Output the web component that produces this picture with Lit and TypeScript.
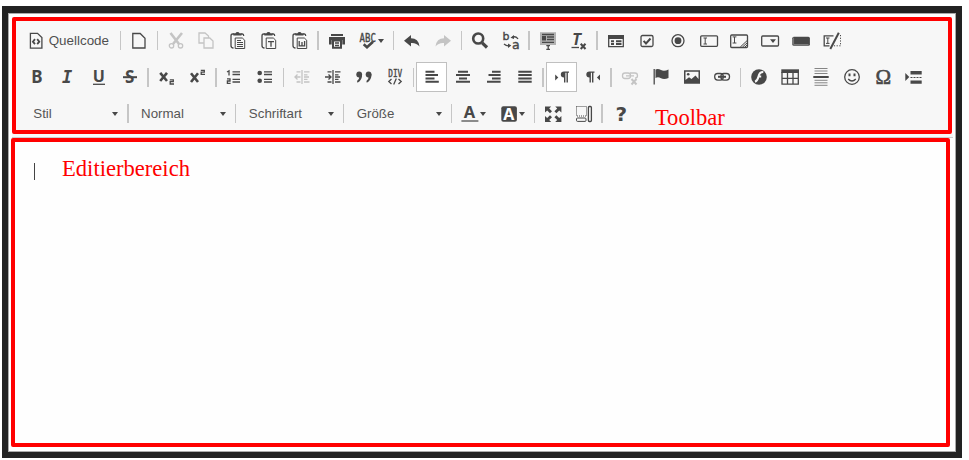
import { LitElement, html, css, svg, nothing } from "lit";
import { customElement, property } from "lit/decorators.js";

// Icons are drawn on a 24x20 grid centred on (12,10).
const clip = svg`<path class="l" d="M8 3H6.6Q5 3 5 5V14.5Q5 17 7.5 17"/><path class="l" d="M15 3H16.5Q17.7 3 17.7 5"/><path class="f" d="M7.3 2.2H9.5Q10 1 11.5 1T13.5 2.2H15.5V4.5H7.3Z"/><path class="l t" d="M9.2 7H16.3L18.7 9.2V17.5H9.2Z"/>`;
const page = svg`<path class="l" d="M5.8 2.5H13.2L18 7.2V17H5.8Z"/>`;

const icons: Record<string, unknown> = {
  source: svg`<path class="l" d="M6.4 2.3H13.5L17.9 6.6V17.2H6.4Z"/><path class="l m" d="M11 8.2L8.9 10.7L11 13.2M13.2 8.2L15.3 10.7L13.2 13.2"/>`,
  newpage: page,
  cut: svg`<path class="l w" d="M6.5 2L15 13M18 2L9 13"/><circle class="l" cx="7.5" cy="14.8" r="2.2"/><circle class="l" cx="16.5" cy="14.8" r="2.2"/>`,
  copy: svg`<path class="l" d="M9 12H4V2H10L13.5 5V7M9 7H14.8L18 10V17H9Z"/>`,
  paste: svg`${clip}<path class="l t" d="M11 9.5H15M11 11.5H17M11 13.5H17M11 15.5H17"/>`,
  pastetext: svg`${clip}<path class="l" d="M11 10.7H17M14 10.7V15.8"/>`,
  pasteword: svg`${clip}<path class="l" d="M11.2 10V14.8H16.6V10M14 11V14.8"/>`,
  print: svg`<path class="f" d="M6 3H18V5H6ZM4 6H20V13.5H17.3V9H6.7V13.5H4Z"/><path class="l b" d="M8 9.5H16V16.7H8Z"/><path class="l" d="M10 12H14M10 14.5H14"/>`,
  spell: svg`<text x="3.6" y="11" class="mono reg" font-size="11.5" textLength="16.3" lengthAdjust="spacingAndGlyphs">ABC</text><path class="l w" d="M7.7 13.2L11 16.2L17 10.7"/>`,
  undo: svg`<path class="f" d="M4 9.7L11 4V7.3Q18.5 7.3 19.5 15.5Q16.5 11.6 11 12V15.4Z"/>`,
  redo: svg`<path class="f" d="M20 9.7L13 4V7.3Q5.5 7.3 4.5 15.5Q7.5 11.6 13 12V15.4Z"/>`,
  find: svg`<circle class="l w" cx="10.2" cy="7.5" r="5"/><path class="l x" d="M14.2 11.8L19 16.5"/>`,
  replace: svg`<text x="3.4" y="8.7" class="dv reg" font-size="11">b</text><text x="13" y="18" class="dv reg" font-size="12.5">a</text><path class="l" d="M13 6.5Q17 4.5 19 8M5 13Q8 15.5 11 14.5"/><path class="f" d="M11.5 6.7L15 4V8ZM12.3 14.5L9 12.5V17Z"/>`,
  selectall: svg`<rect x="4" y="1.2" width="16" height="12.8" fill="#b3b3b3"/><path class="l" d="M6 3.5H18M11 6H18M11 8.5H18M6 11.3H18M10.3 14.7H14M10.3 18.3H14M12.2 14.5V18"/><path class="f" d="M6 5H10V9.5H6Z"/>`,
  removeformat: svg`<text x="5" y="14" class="mono bi" font-size="16">T</text><path class="l" d="M4.5 16.5H12"/><path class="l b" d="M13.7 12.8L18.5 18M18.5 12.8L13.7 18"/>`,
  form: svg`<path class="f" d="M4 4H20V8H4Z"/><path class="l" d="M4.7 5V15.7H19.3V5"/><path class="l b" d="M7 10.2H10M7 13H10M12 10.2H17.5M12 13H17.5"/>`,
  checkbox: svg`<rect class="l" x="6" y="4.5" width="12" height="11" rx="1.5"/><path class="l b" d="M8.6 9.8L11 12.5L15.5 7.5"/>`,
  radio: svg`<circle class="l" cx="12" cy="9.7" r="6"/><circle class="f" cx="12" cy="9.7" r="3.4"/>`,
  textfield: svg`<rect class="l" x="3.7" y="4.8" width="16.8" height="10.5" rx="1"/><path class="l t" d="M6.5 7H10M6.5 13H10M8.2 7V13"/>`,
  textarea: svg`<rect class="l" x="3.7" y="4" width="16.8" height="12.5" rx="1"/><path class="l t" d="M5.6 5.9H9.4M5.6 12H9.4M7.5 6V12M13.3 16L20 9.7M15.5 16L20 12M18 16L20 14"/>`,
  select: svg`<rect class="l" x="3.7" y="5" width="16.8" height="10" rx="1"/><path class="f" d="M12 8.2H18L15 12Z"/>`,
  button: svg`<rect class="f" x="3.3" y="5.7" width="17.6" height="9" rx="1.5"/><path d="M4.6 6.5V13.5H19.5" fill="none" stroke="#8a8a8a" stroke-width=".8"/>`,
  hidden: svg`<path class="l" d="M13.5 4.8H4.2V14.8H9.5"/><path class="l t" d="M6 7H9.5M6 12.4H9.5M7.8 7V12.4"/><path class="l b" d="M18.8 1.8L10.3 18"/><path class="l t" stroke-dasharray="1.2 1.5" d="M20.5 4V14.8H13"/>`,
  bold: svg`<text x="6.3" y="16" class="bold" font-size="17">B</text>`,
  italic: svg`<text x="6" y="16" class="mono bi" font-size="17">I</text>`,
  underline: svg`<text x="5.7" y="14.6" class="bold" font-size="16">U</text><path class="l" d="M6 17.3H18"/>`,
  strike: svg`<text x="7" y="15.9" class="bold" font-size="17">S</text><path class="l b" d="M5 10.2H19"/>`,
  sub: svg`<path class="l w" d="M5.2 5.8L12 14M12 5.8L5.2 14"/><path class="l" d="M14.8 12.8H18.3V14.7H15.2V17H19"/>`,
  sup: svg`<path class="l w" d="M5 6.2L12 15M12 6.2L5 15"/><path class="l" d="M14.8 3.4H18.3V5.2H15.2V7.3H19"/>`,
  ol: svg`<path class="l" d="M5 5L7 3.8V8.6M5 11.8H8V14H5.4V16.3H8.6M10.5 4.8H18M10.5 7.5H18M10.5 12.3H18M10.5 15H18"/>`,
  ul: svg`<circle class="f" cx="6.7" cy="6" r="2.3"/><circle class="f" cx="6.7" cy="13.7" r="2.3"/><path class="l" d="M11 4.8H19M11 7.5H19M11 12.3H19M11 15H19"/>`,
  outdent: svg`<path class="l" d="M4.5 10H10.5M7.5 7.5L5 10L7.5 12.5M12 3V17M6.5 4.8H10.5M6.5 15H10.5M14 4.8H19.5M14 7.8H17.5M14 10H19M14 12.4H17.5M14 15H19.5"/>`,
  indent: svg`<path class="l" d="M4 10H9.5M7.5 7.5L10 10L7.5 12.5M12 3V17M6.5 4.8H10.5M6.5 15H10.5M14 4.8H19.5M14 7.8H17.5M14 10H19M14 12.4H17.5M14 15H19.5"/>`,
  quote: svg`<circle class="f" cx="7.2" cy="7.5" r="2.9"/><circle class="f" cx="16.6" cy="7.5" r="2.9"/><path class="f" d="M7.3 9.5L10 7Q10.5 13 5.5 15.8L5 14Q7.5 12.5 7.3 9.5ZM16.6 9.5L19.4 7Q19.8 13 14.8 15.8L14.4 14Q16.8 12.5 16.6 9.5Z"/>`,
  div: svg`<text x="5.3" y="10" class="mono reg" font-size="10.8" textLength="14" lengthAdjust="spacingAndGlyphs">DIV</text><path class="l" d="M8.5 12L5.8 14.5L8.5 17M15.5 12L18.2 14.5L15.5 17M13.3 11.5L10.7 17.5"/>`,
  left: svg`<path class="l b" d="M5.5 4.8H14.5M5.5 8H18M5.5 11.4H14.5M5.5 14.8H18.8"/>`,
  center: svg`<path class="l b" d="M7 4.8H17M5 8H19M8 11.4H16M5 14.8H19"/>`,
  right: svg`<path class="l b" d="M10 4.8H18.6M6.5 8H18.6M10 11.4H18.6M5 14.8H18.6"/>`,
  justify: svg`<path class="l b" d="M5.3 4.8H18.7M5.3 8H18.7M5.3 11.4H18.7M5.3 14.8H18.7"/>`,
  ltr: svg`<path class="f" d="M5.2 7.5L8.3 10.5L5.2 13.5Z"/><path class="f" d="M19 4.5H14Q10.8 4.5 10.8 7.4T14 10.4V15.5H15.4V5.7H16.5V15.5H17.9V5.7H19Z"/>`,
  rtl: svg`<path class="f" d="M19 7.5L15.9 10.5L19 13.5Z"/><path class="f" d="M13.5 4.5H8.5Q5.3 4.5 5.3 7.4T8.5 10.4V15.5H9.9V5.7H11V15.5H12.4V5.7H13.5Z"/>`,
  unlink: svg`<rect class="l" x="4.5" y="6" width="8" height="5.5" rx="2.5"/><path class="l" d="M12 6H17Q19.5 6 19.5 8.7Q19.5 11 17 11.2M8 8.8H16"/><path class="l b" d="M13.5 12L18.5 17.5M18.5 12L13.5 17.5"/>`,
  anchor: svg`<path class="l" d="M5.2 2V17.5"/><path class="f" d="M6.5 2.5Q9 1.3 12 3T19.5 2.5V11Q15 12.8 12 11.2T6.5 11Z"/>`,
  image: svg`<path fill-rule="evenodd" class="f" d="M4 3.3H20V16.7H4ZM5.5 4.8V13L9 10.2L11.5 12L15.5 8.5L18.5 12V4.8Z"/><circle class="f" cx="8.2" cy="7.3" r="1.3"/>`,
  link: svg`<rect class="l" x="4.7" y="6.5" width="8.6" height="6.6" rx="3"/><rect class="l" x="10.9" y="6.5" width="8.6" height="6.6" rx="3"/><path class="l b" d="M8 9.8H16"/>`,
  flash: svg`<circle class="f" cx="12" cy="10" r="7.8"/><path d="M16.3 5Q12.5 4.8 11.5 9.5Q10.5 13.8 8 14.7M10.7 9.5H14.2" fill="none" stroke="#f7f7f7" stroke-width="2"/>`,
  table: svg`<path class="f" d="M3.3 2.3H21V6H3.3Z"/><path class="l" d="M4 5V17.2H20.3V5M4 11.4H20.3M9.5 6V17M15 6V17"/>`,
  hr: svg`<path stroke="#858585" fill="none" d="M5.5 1.5H18.5M5.5 4H18.5M5.5 6.5H18.5M5.5 13.3H18.5M5.5 15.8H18.5M5.5 18.3H18.5"/><path class="l b" d="M4.3 10H19.7"/>`,
  smiley: svg`<circle class="l" cx="12" cy="10" r="7.3"/><path class="f" d="M8.5 6.5H10.5V9.2H8.5ZM13.5 6.5H15.5V9.2H13.5Z"/><path class="l" d="M8.2 12Q12 16 15.8 12"/>`,
  omega: svg`<text x="4.5" y="17" class="serif" font-size="21">Ω</text>`,
  pagebreak: svg`<path class="f" d="M3.3 6L7.3 10L3.3 14ZM8.5 4H19.7V7.5H8.5ZM8.5 13.5H19.7V16.7H8.5Z"/><path class="l t" stroke-dasharray="2 1" d="M8.5 10.5H20"/>`,
  color: svg`<text x="5.8" y="14" class="bold" font-size="16.5">A</text><path stroke="#8b8b8b" stroke-width="2" d="M3.4 17H20.4"/>`,
  bgcolor: svg`<rect class="f" x="4.3" y="2.3" width="15.6" height="15.4" rx="2"/><text x="6.2" y="15.5" class="bold inv" font-size="16">A</text>`,
  maximize: svg`<path class="f" d="M4 2.5H10.2L8.2 4.6L11 7.3L9 9.2L6.2 6.6L4 8.5ZM20.4 2.5H14.2L16.2 4.6L13.4 7.3L15.4 9.2L18.2 6.6L20.4 8.5ZM4 18H10.2L8.2 16L11 13.2L9 11.3L6.2 14L4 12ZM20.4 18H14.2L16.2 16L13.4 13.2L15.4 11.3L18.2 14L20.4 12Z"/>`,
  blocks: svg`<rect class="l t" stroke-dasharray="1 1" x="4.5" y="2.5" width="10" height="9.5"/><rect class="l t" x="4.5" y="14" width="9.5" height="3.4" rx="1"/><rect class="l" x="16.4" y="2.5" width="3" height="15" rx="1"/>`,
  help: svg`<text x="6.6" y="16.7" class="dv" font-size="20">?</text>`,
};

@customElement("tool-button")
export class ToolButton extends LitElement {
  @property() icon = "";
  @property() label = "";
  @property({ type: Boolean }) menu = false;
  static styles = css`
    :host { display: flex; align-items: center; justify-content: center; box-sizing: border-box;
      flex: none; width: 30.97px; height: 30px; color: #484848; font: 13.4px "Liberation Sans", Arial, sans-serif; }
    :host([label]) { width: 96.4px; justify-content: flex-start; padding-left: 2.8px; gap: 0.6px; }
    :host([menu]) { width: 38.6px; justify-content: flex-start; padding-left: 4px; }
    :host([off]) { color: #c4c4c4; }
    :host([on]) { background: #fff; border: 1px solid #c0c0c0; }
    svg { width: 24px; height: 20px; flex: none; overflow: visible; }
    .label { color: #505050; }
    .arrow { border: 3.5px solid transparent; border-top: 4px solid #484848; border-bottom: 0; margin-left: -2px; }
    .f { fill: currentColor; }
    .l { fill: none; stroke: currentColor; stroke-width: 1.3; }
    .t { stroke-width: 1; }
    .m { stroke-width: 1.8; }
    .b { stroke-width: 2; }
    .w { stroke-width: 2.6; }
    .x { stroke-width: 3.2; }
    text { fill: currentColor; }
    .inv { fill: #fff; }
    .bold { font-family: "Noto Sans", sans-serif; font-weight: 700; }
    .dv { font-family: "DejaVu Sans", sans-serif; font-weight: 700; }
    .mono { font-family: "DejaVu Sans Mono", monospace; font-weight: 700; }
    .reg { font-weight: 400; stroke: currentColor; stroke-width: 0.4; }
    .bi { font-style: italic; }
    .serif { font-family: "Liberation Serif", serif; stroke: currentColor; stroke-width: 0.6; }
  `;
  render() {
    return html`<svg viewBox="0 0 24 20">${icons[this.icon]}</svg>
      ${this.label ? html`<span class="label">${this.label}</span>` : nothing}
      ${this.menu ? html`<span class="arrow"></span>` : nothing}`;
  }
}

const row1 = "newpage | cut- copy- paste pastetext pasteword | print spell> | undo redo- | find replace | selectall removeformat | form checkbox radio textfield textarea select button hidden";
const row2 = "bold italic underline strike | sub sup | ol ul | outdent- indent quote div | left+ center right justify | ltr+ rtl | unlink- anchor image link | flash table hr smiley omega pagebreak";
const row3 = "color> bgcolor> | maximize blocks | help";

@customElement("app-root")
export class AppRoot extends LitElement {
  static styles = css`
    :host { display: block; box-sizing: border-box; width: 969px; height: 460px; padding: 6px 7px 2px 2px;
      background: #fff; overflow: hidden; }
    .frame { box-sizing: border-box; height: 452px; border: 7px solid #222; border-width: 7px 6px 6px;
      background: #fff; box-shadow: inset 0 0 0 1px #aaa; padding: 4px 3px 0; display: flex; flex-direction: column; }
    .bar { box-sizing: border-box; height: 117px; margin: 0 1px 0 1px; border: 4px solid #f00; border-radius: 2px;
      background: #f7f7f7; padding: 1.5px 0 0 5.3px; }
    .row { display: flex; align-items: center; height: 36.6px; }
    .third { padding-left: 2px; }
    .sep { flex: none; width: 5.9px; height: 19px; display: flex; padding-left: 2px; box-sizing: border-box; }
    .sep::before { content: ""; width: 1.5px; background: #c6c6c6; }
    .combo { flex: none; width: 101.9px; box-sizing: border-box; padding: 0 7px 0 10px; display: flex;
      align-items: center; justify-content: space-between; font: 13.3px "Liberation Sans", Arial, sans-serif; color: #555; }
    .combo::after { content: ""; border: 3.5px solid transparent; border-top: 4px solid #484848; border-bottom: 0; }
    .note { font: 22.6px/26px "Liberation Serif", "Times New Roman", serif; color: #f00; white-space: nowrap; }
    .third .note { margin: 8px 0 0 18.6px; }
    .rule { height: 4px; box-sizing: border-box; border-bottom: 1px solid #ccc; background: #f7f7f7; margin-left: 1px; }
    .edit { box-sizing: border-box; height: 309px; margin-right: 3.5px; border: 4px solid #f00; border-radius: 2px;
      background: #fefefe; display: flex; padding: 14px 0 0 19px; gap: 27px; }
    .caret { width: 1px; height: 17px; margin-top: 7px; background: #444; }
  `;

  private tools(spec: string) {
    return spec.split(" ").map((s) => {
      if (s === "|") return html`<span class="sep"></span>`;
      return html`<tool-button icon=${s.replace(/[-+>]/, "")} ?off=${s.endsWith("-")} ?on=${s.endsWith("+")}
        ?menu=${s.endsWith(">")}></tool-button>`;
    });
  }

  render() {
    return html`<div class="frame">
      <div class="bar">
        <div class="row"><tool-button icon="source" label="Quellcode"></tool-button><span class="sep"></span>${this.tools(row1)}</div>
        <div class="row">${this.tools(row2)}</div>
        <div class="row third">
          ${["Stil", "Normal", "Schriftart", "Größe"].map((t) => html`<span class="combo">${t}</span><span class="sep"></span>`)}
          ${this.tools(row3)}<span class="note">Toolbar</span>
        </div>
      </div>
      <div class="rule"></div>
      <div class="edit"><span class="caret"></span><span class="note">Editierbereich</span></div>
    </div>`;
  }
}
